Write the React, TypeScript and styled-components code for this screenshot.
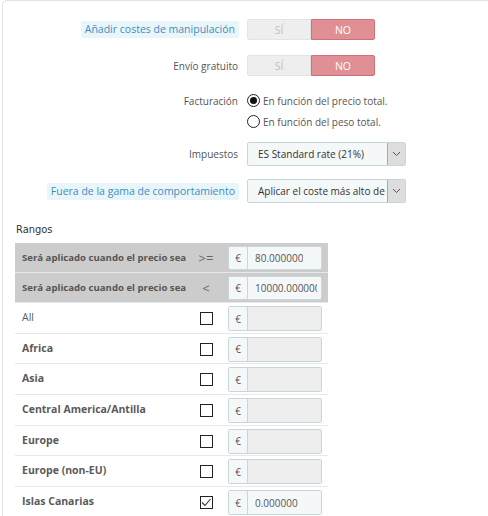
import React from 'react'
import styled, { createGlobalStyle } from 'styled-components'

const GlobalStyle = createGlobalStyle`
  html, body {
    margin: 0;
    padding: 0;
    background: #ffffff;
  }
  body {
    font-family: "Open Sans", "Liberation Sans", sans-serif;
    font-size: 10px;
    color: #555;
  }
`

const Panel = styled.div`
  margin-left: 2px;
  height: 540px;
  border: 1px solid #e2e2e2;
  border-right: none;
  border-bottom: none;
  border-radius: 5px 0 0 0;
  padding-top: 18px;
  overflow: hidden;
`

const FormRow = styled.div<{ $mb: number }>`
  display: grid;
  grid-template-columns: 236px 1fr;
  column-gap: 8px;
  align-items: start;
  margin-bottom: ${(p) => p.$mb}px;
`

const Label = styled.div<{ $h: number }>`
  display: flex;
  justify-content: flex-end;
  align-items: center;
  height: ${(p) => p.$h}px;
  padding-right: 1px;
  font-size: 10px;
`

const HintLabel = styled.span`
  background: #eaf5fa;
  color: #3a8fbd;
  font-size: 10.5px;
  padding: 0 4px;
  line-height: 17px;
  border-radius: 2px;
  margin-right: -1px;
`

const Toggle = styled.div`
  display: flex;
  width: 128px;
  height: 21px;
  font-size: 10.5px;
`

const ToggleHalf = styled.div<{ $active?: boolean }>`
  flex: 1;
  display: flex;
  align-items: center;
  justify-content: center;
  background: ${(p) => (p.$active ? '#e08f95' : '#eeeeee')};
  color: ${(p) => (p.$active ? '#ffffff' : '#c0c0c0')};
  border: 1px solid ${(p) => (p.$active ? '#cd727a' : '#e4e4e4')};
  border-radius: ${(p) => (p.$active ? '0 2px 2px 0' : '2px 0 0 2px')};
  box-sizing: border-box;
`

const RadioList = styled.div`
  display: flex;
  flex-direction: column;
`

const RadioLine = styled.label`
  display: flex;
  align-items: center;
  height: 21px;
  gap: 3px;
  color: #555;
`

const RadioDot = styled.span<{ $checked?: boolean }>`
  width: 13px;
  height: 13px;
  box-sizing: border-box;
  border: 1.5px solid #222;
  border-radius: 50%;
  background: #fff;
  display: flex;
  align-items: center;
  justify-content: center;
  &::after {
    content: '';
    width: 7px;
    height: 7px;
    border-radius: 50%;
    background: ${(p) => (p.$checked ? '#111' : 'transparent')};
  }
`

const Select = styled.div`
  display: flex;
  width: 159px;
  height: 24px;
  box-sizing: border-box;
  border: 1px solid #c7d6db;
  border-radius: 2px;
  background: #f5f8f9;
  overflow: hidden;
`

const SelectText = styled.div`
  flex: 1;
  display: flex;
  align-items: center;
  padding-left: 10px;
  color: #333;
  white-space: nowrap;
  overflow: hidden;
`

const SelectArrow = styled.div`
  width: 17px;
  background: #dddddd;
  border-left: 1px solid #aaaaaa;
  display: flex;
  align-items: center;
  justify-content: center;
`

const SectionTitle = styled.div`
  font-family: "DejaVu Sans Condensed", "Liberation Sans Narrow", "Open Sans", sans-serif;
  font-stretch: condensed;
  font-size: 11px;
  color: #333;
  margin: 0 0 5px 13px;
  line-height: 16px;
  height: 16px;
`

const Table = styled.div`
  margin-left: 12px;
  width: 313px;
`

const Row = styled.div<{ $head?: boolean }>`
  display: grid;
  grid-template-columns: 176px 30px 1fr;
  align-items: ${(p) => (p.$head ? 'center' : 'start')};
  height: ${(p) => (p.$head ? '29px' : '29.7px')};
  background: ${(p) => (p.$head ? '#cccccc' : '#ffffff')};
  border-bottom: 1px solid ${(p) => (p.$head ? '#e8e8e8' : '#e5e9ea')};
`

const RowLabel = styled.div<{ $bold?: boolean; $head?: boolean }>`
  padding-left: 7px;
  padding-top: ${(p) => (p.$head ? '0' : '6px')};
  line-height: 16px;
  font-size: ${(p) => (p.$head ? '9.6px' : '10.5px')};
  font-weight: ${(p) => (p.$bold ? 700 : 400)};
  color: ${(p) => (p.$head ? '#555' : '#5a5a5a')};
  white-space: nowrap;
`

const Sign = styled.div`
  text-align: center;
  font-size: 13px;
  color: #666;
`

const CheckCell = styled.div`
  display: flex;
  justify-content: center;
  padding-top: 9px;
`

const CheckBox = styled.span`
  width: 13px;
  height: 13px;
  box-sizing: border-box;
  border: 1.5px solid #222;
  background: #fff;
  display: flex;
  align-items: center;
  justify-content: center;
`

const InputGroup = styled.div<{ $head?: boolean }>`
  display: flex;
  margin-left: 7px;
  margin-top: ${(p) => (p.$head ? '0' : '3px')};
  width: 94px;
  height: ${(p) => (p.$head ? '24px' : '25px')};
  box-sizing: border-box;
  border: 1px solid #c7d6db;
  border-radius: 2px;
  overflow: hidden;
`

const Addon = styled.div`
  width: 18px;
  display: flex;
  align-items: center;
  justify-content: center;
  background: #f5f8f9;
  border-right: 1px solid #c7d6db;
  color: #555;
`

const InputValue = styled.div<{ $disabled?: boolean }>`
  flex: 1;
  min-width: 0;
  display: flex;
  align-items: center;
  padding: 0 4px 0 7px;
  background: ${(p) => (p.$disabled ? '#eeeeee' : '#f5f8f9')};
  color: #555;
  white-space: nowrap;
  overflow: hidden;
`

const ValueText = styled.span`
  display: block;
  overflow: hidden;
  white-space: nowrap;
`

const Chevron = () => (
  <svg width="9" height="6" viewBox="0 0 9 6">
    <path d="M1 1l3.5 3.5L8 1" fill="none" stroke="#555" strokeWidth="1" />
  </svg>
)

const Check = () => (
  <svg width="10" height="9" viewBox="0 0 10 9">
    <path d="M1 4.5l3 3L9.5 1" fill="none" stroke="#333" strokeWidth="1.1" />
  </svg>
)

const zones = [
  { name: 'All', bold: false, checked: false, value: '' },
  { name: 'Africa', bold: true, checked: false, value: '' },
  { name: 'Asia', bold: true, checked: false, value: '' },
  { name: 'Central America/Antilla', bold: true, checked: false, value: '' },
  { name: 'Europe', bold: true, checked: false, value: '' },
  { name: 'Europe (non-EU)', bold: true, checked: false, value: '' },
  { name: 'Islas Canarias', bold: true, checked: true, value: '0.000000' },
]

const App = () => {
  return (
    <>
      <GlobalStyle />
      <Panel>
        <FormRow $mb={15}>
          <Label $h={21}>
            <HintLabel>Añadir costes de manipulación</HintLabel>
          </Label>
          <Toggle>
            <ToggleHalf>SÍ</ToggleHalf>
            <ToggleHalf $active>NO</ToggleHalf>
          </Toggle>
        </FormRow>
        <FormRow $mb={14}>
          <Label $h={21}>Envío gratuito</Label>
          <Toggle>
            <ToggleHalf>SÍ</ToggleHalf>
            <ToggleHalf $active>NO</ToggleHalf>
          </Toggle>
        </FormRow>
        <FormRow $mb={10}>
          <Label $h={21}>Facturación</Label>
          <RadioList>
            <RadioLine>
              <RadioDot $checked />
              En función del precio total.
            </RadioLine>
            <RadioLine>
              <RadioDot />
              En función del peso total.
            </RadioLine>
          </RadioList>
        </FormRow>
        <FormRow $mb={13}>
          <Label $h={24}>Impuestos</Label>
          <Select>
            <SelectText>ES Standard rate (21%)</SelectText>
            <SelectArrow>
              <Chevron />
            </SelectArrow>
          </Select>
        </FormRow>
        <FormRow $mb={19}>
          <Label $h={24}>
            <HintLabel>Fuera de la gama de comportamiento</HintLabel>
          </Label>
          <Select>
            <SelectText>Aplicar el coste más alto de</SelectText>
            <SelectArrow>
              <Chevron />
            </SelectArrow>
          </Select>
        </FormRow>
        <SectionTitle>Rangos</SectionTitle>
        <Table>
          <Row $head>
            <RowLabel $bold $head>
              Será aplicado cuando el precio sea
            </RowLabel>
            <Sign>&gt;=</Sign>
            <InputGroup $head>
              <Addon>€</Addon>
              <InputValue>
                <ValueText>80.000000</ValueText>
              </InputValue>
            </InputGroup>
          </Row>
          <Row $head>
            <RowLabel $bold $head>
              Será aplicado cuando el precio sea
            </RowLabel>
            <Sign>&lt;</Sign>
            <InputGroup $head>
              <Addon>€</Addon>
              <InputValue>
                <ValueText>10000.000000</ValueText>
              </InputValue>
            </InputGroup>
          </Row>
          {zones.map((z) => (
            <Row key={z.name}>
              <RowLabel $bold={z.bold}>{z.name}</RowLabel>
              <CheckCell>
                <CheckBox>{z.checked && <Check />}</CheckBox>
              </CheckCell>
              <InputGroup>
                <Addon>€</Addon>
                <InputValue $disabled={!z.checked}>
                  <ValueText>{z.value}</ValueText>
                </InputValue>
              </InputGroup>
            </Row>
          ))}
        </Table>
      </Panel>
    </>
  )
}

export default App
